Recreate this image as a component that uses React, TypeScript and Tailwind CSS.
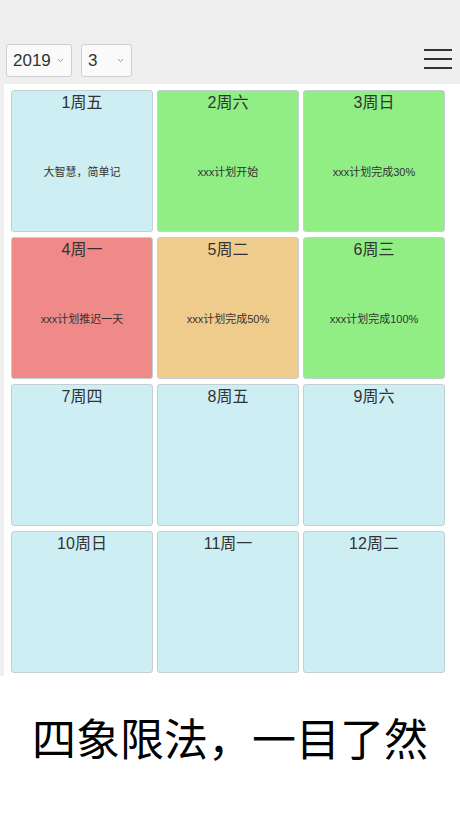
import { ChevronDown } from "lucide-react";

const days = [
  { title: "1周五", note: "大智慧，简单记", bg: "bg-[#cdeef3]" },
  { title: "2周六", note: "xxx计划开始", bg: "bg-[#90ee85]" },
  { title: "3周日", note: "xxx计划完成30%", bg: "bg-[#90ee85]" },
  { title: "4周一", note: "xxx计划推迟一天", bg: "bg-[#f08a88]" },
  { title: "5周二", note: "xxx计划完成50%", bg: "bg-[#f0cc8c]" },
  { title: "6周三", note: "xxx计划完成100%", bg: "bg-[#90ee85]" },
  { title: "7周四", note: "", bg: "bg-[#cdeef3]" },
  { title: "8周五", note: "", bg: "bg-[#cdeef3]" },
  { title: "9周六", note: "", bg: "bg-[#cdeef3]" },
  { title: "10周日", note: "", bg: "bg-[#cdeef3]" },
  { title: "11周一", note: "", bg: "bg-[#cdeef3]" },
  { title: "12周二", note: "", bg: "bg-[#cdeef3]" },
];

const font = "font-['Liberation_Sans','Noto_Sans_CJK_SC',sans-serif]";

function Select({ value, width }: { value: string; width: string }) {
  return (
    <div
      className={`${width} h-[33px] flex items-center justify-between pl-[6px] pr-[6px] bg-[#fafafa] border border-[#cfcfcf] rounded-[3px]`}
    >
      <span className="text-[17px] text-[#333]">{value}</span>
      <ChevronDown size={9} strokeWidth={2} className="text-[#777]" />
    </div>
  );
}

export default function App() {
  return (
    <div className={`${font} w-[460px] min-h-[818px] bg-white`}>
      {/* top bar */}
      <div className="bg-[#efefef] h-[84px] flex items-end justify-between pl-[6px] pr-[8px] pb-[7px]">
        <div className="flex gap-[9px]">
          <Select value="2019" width="w-[66px]" />
          <Select value="3" width="w-[51px]" />
        </div>
        <div className="flex flex-col gap-[7px] mb-[8px]">
          <div className="w-[28px] h-[2px] bg-[#333]" />
          <div className="w-[28px] h-[2px] bg-[#333]" />
          <div className="w-[28px] h-[2px] bg-[#333]" />
        </div>
      </div>

      {/* calendar */}
      <div className="bg-[#efefef] pl-[4px]">
        <div className="bg-white pt-[6px] pb-[3px] pl-[7px]">
          <div className="grid grid-cols-[142px_142px_142px] gap-x-[4px] gap-y-[5px]">
            {days.map((d) => (
              <div
                key={d.title}
                className={`${d.bg} h-[142px] border border-[#c4cfd2] rounded-[3px] flex flex-col`}
              >
                <div className="text-center text-[16px] leading-[22px] pt-[1px] text-[#333]">
                  {d.title}
                </div>
                <div className="flex-1 flex items-center justify-center text-[11px] text-[#333]">
                  {d.note}
                </div>
              </div>
            ))}
          </div>
        </div>
      </div>

      {/* caption */}
      <div className="h-[143px] flex items-center justify-center pb-[22px]">
        <span className="text-[44px] text-black font-['Noto_Sans_CJK_SC',sans-serif]">
          四象限法，一目了然
        </span>
      </div>
    </div>
  );
}
